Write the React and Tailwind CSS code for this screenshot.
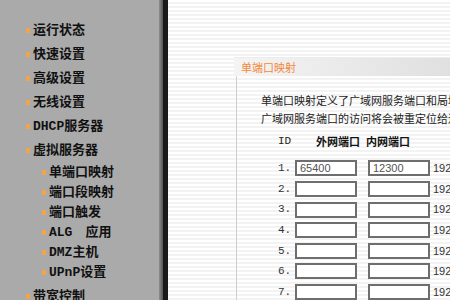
import React from 'react';

const mainItems = ['运行状态', '快速设置', '高级设置', '无线设置'];

const subItems = [
  <>单端口映射</>,
  <>端口段映射</>,
  <>端口触发</>,
  <><span className="mr-[13px]">ALG</span>应用</>,
  <>DMZ主机</>,
  <>UPnP设置</>,
];

const rows = [
  ['65400', '12300'],
  ['', ''],
  ['', ''],
  ['', ''],
  ['', ''],
  ['', ''],
  ['', ''],
];

function NavItem({ children, sub }) {
  return (
    <div className={`flex items-center ${sub ? 'h-5 pl-[42px]' : 'h-6 pl-[26px]'}`}>
      <span className="w-[4px] h-[5px] bg-[#f5a347] mr-[3px]" />
      <span className="whitespace-nowrap">{children}</span>
    </div>
  );
}

export default function App() {
  return (
    <div className="flex w-[450px] h-[300px] overflow-hidden bg-white">
      <div
        className="w-[159px] shrink-0 bg-[#aaaaaa] pt-[18px] text-[13px] font-bold text-[#111] leading-none"
        style={{ fontFamily: '"Liberation Mono", "Noto Sans CJK SC", monospace' }}
      >
        {mainItems.map((t) => (
          <NavItem key={t}>{t}</NavItem>
        ))}
        <NavItem>DHCP服务器</NavItem>
        <NavItem>虚拟服务器</NavItem>
        {subItems.map((t, i) => (
          <NavItem key={i} sub>{t}</NavItem>
        ))}
        <div className="h-[2px]" />
        <NavItem>带宽控制</NavItem>
      </div>
      <div className="w-[4px] shrink-0 bg-gradient-to-r from-[#8e8e8e] to-[#555]" />
      <div className="w-[5px] shrink-0 bg-[#1a1a1a]" />

      <div
        className="flex-1 flex flex-col pt-[57px] bg-[repeating-linear-gradient(to_bottom,#ffffff_0px,#ffffff_2px,#f3f3f3_2px,#f3f3f3_4px)]"
        style={{ fontFamily: '"Noto Sans CJK SC", "Liberation Sans", sans-serif' }}
      >
        <div className="ml-[66px] h-[22px] flex items-center pl-[7px] bg-gradient-to-r from-[#f4f4f4] to-[#dedede] border-t border-[#ececec]">
          <span className="text-[11px] text-[#f5883a] leading-none">单端口映射</span>
        </div>

        <div className="ml-[68px] flex-1 border-l border-[#cfcfcf] pl-[24px] pt-[15px]">
          <div className="text-[11px] leading-[18px] text-[#222] whitespace-nowrap">
            <div>单端口映射定义了广域网服务端口和局域网</div>
            <div>广域网服务端口的访问将会被重定位给通过</div>
          </div>

          <div className="mt-[7px] pl-[17px] flex items-center h-[14px] text-[11px] whitespace-nowrap">
            <span className="w-[38px] text-[#222]" style={{ fontFamily: '"Liberation Mono", monospace' }}>ID</span>
            <span className="w-[50px] font-bold text-[#111]">外网端口</span>
            <span className="font-bold text-[#111]">内网端口</span>
          </div>

          <div className="mt-[12px] pl-[17px] flex flex-col gap-[4.6px]">
            {rows.map(([a, b], i) => (
              <div key={i} className="flex items-center h-[16px] whitespace-nowrap">
                <span className="w-[17px] text-[11px] text-[#333]" style={{ fontFamily: '"Liberation Mono", monospace' }}>
                  {i + 1}.
                </span>
                <input
                  readOnly
                  value={a}
                  className="w-[62px] h-[16px] border-2 border-[#6e6e6e] bg-white px-[3px] text-[11px] text-[#555] outline-none"
                  style={{ fontFamily: '"Liberation Sans", sans-serif' }}
                />
                <input
                  readOnly
                  value={b}
                  className="ml-[11px] w-[62px] h-[16px] border-2 border-[#6e6e6e] bg-white px-[3px] text-[11px] text-[#555] outline-none"
                  style={{ fontFamily: '"Liberation Sans", sans-serif' }}
                />
                <span className="ml-[3px] text-[11px] text-[#333]" style={{ fontFamily: '"Liberation Sans", sans-serif' }}>
                  192
                </span>
              </div>
            ))}
          </div>
        </div>
      </div>
    </div>
  );
}
